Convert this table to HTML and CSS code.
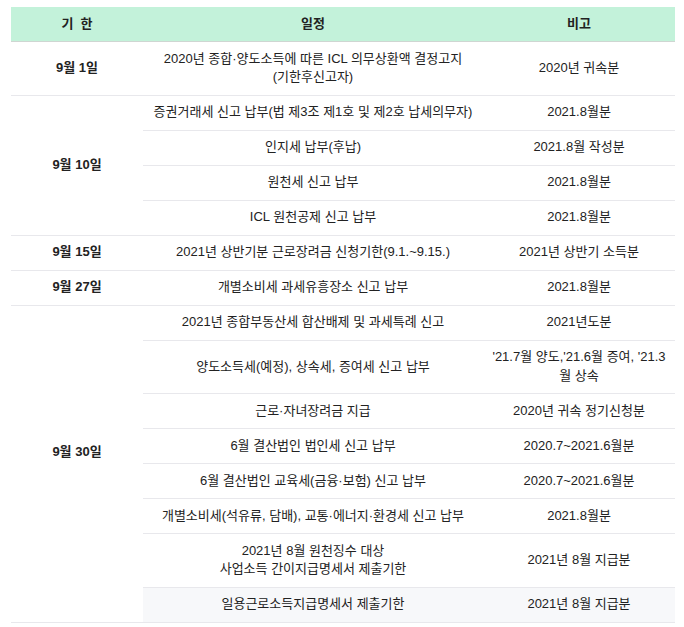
FILE: index.html
```html
<!DOCTYPE html>
<html lang="ko">
<head>
<meta charset="utf-8">
<title>9월 세무일정</title>
<link rel="stylesheet" href="styles.css">
</head>
<body>
<div class="wrap">
<table class="schedule">
  <colgroup>
    <col class="c-date">
    <col class="c-task">
    <col class="c-note">
  </colgroup>
  <thead>
    <tr><th>기&nbsp;&nbsp;한</th><th>일정</th><th>비고</th></tr>
  </thead>
  <tbody>
    <tr>
      <td class="date">9월 1일</td>
      <td>2020년 종합·양도소득에 따른 ICL 의무상환액 결정고지<br>(기한후신고자)</td>
      <td>2020년 귀속분</td>
    </tr>
    <tr>
      <td class="date" rowspan="4">9월 10일</td>
      <td>증권거래세 신고 납부(법 제3조 제1호 및 제2호 납세의무자)</td>
      <td>2021.8월분</td>
    </tr>
    <tr><td>인지세 납부(후납)</td><td>2021.8월 작성분</td></tr>
    <tr><td>원천세 신고 납부</td><td>2021.8월분</td></tr>
    <tr><td>ICL 원천공제 신고 납부</td><td>2021.8월분</td></tr>
    <tr>
      <td class="date">9월 15일</td>
      <td>2021년 상반기분 근로장려금 신청기한(9.1.~9.15.)</td>
      <td>2021년 상반기 소득분</td>
    </tr>
    <tr>
      <td class="date">9월 27일</td>
      <td>개별소비세 과세유흥장소 신고 납부</td>
      <td>2021.8월분</td>
    </tr>
    <tr>
      <td class="date date-long" rowspan="8">9월 30일</td>
      <td>2021년 종합부동산세 합산배제 및 과세특례 신고</td>
      <td>2021년도분</td>
    </tr>
    <tr><td>양도소득세(예정), 상속세, 증여세 신고 납부</td><td>'21.7월 양도,'21.6월 증여, '21.3<br>월 상속</td></tr>
    <tr><td>근로·자녀장려금 지급</td><td>2020년 귀속 정기신청분</td></tr>
    <tr><td>6월 결산법인 법인세 신고 납부</td><td>2020.7~2021.6월분</td></tr>
    <tr><td>6월 결산법인 교육세(금융·보험) 신고 납부</td><td>2020.7~2021.6월분</td></tr>
    <tr><td>개별소비세(석유류, 담배), 교통·에너지·환경세 신고 납부</td><td>2021.8월분</td></tr>
    <tr><td>2021년 8월 원천징수 대상<br>사업소득 간이지급명세서 제출기한</td><td>2021년 8월 지급분</td></tr>
    <tr class="shade"><td>일용근로소득지급명세서 제출기한</td><td>2021년 8월 지급분</td></tr>
  </tbody>
</table>
</div>
</body>
</html>
```

FILE: styles.css
```css
html, body {
  margin: 0;
  padding: 0;
  background: #ffffff;
}

.wrap {
  padding: 7px 9px 0 11px;
}

.schedule {
  width: 664px;
  border-collapse: collapse;
  table-layout: fixed;
  font-family: "Liberation Sans", "Noto Sans CJK KR", sans-serif;
  font-size: 13px;
  line-height: 18.5px;
  color: #222222;
}

.c-date { width: 132px; }
.c-task { width: 340px; }
.c-note { width: 192px; }

.schedule th {
  background: #c3f2da;
  font-weight: bold;
  text-align: center;
  padding: 7.75px 4px;
  border-bottom: 1px solid #cfd6d2;
}

.schedule td {
  text-align: center;
  vertical-align: middle;
  padding: 7.75px 4px;
  border-bottom: 1px solid #e8e8ec;
}

.schedule td.date {
  font-weight: bold;
}

.schedule td.date-long {
  padding-bottom: 30px;
}

.schedule tr.shade td {
  background: #f7f8fa;
}
```
